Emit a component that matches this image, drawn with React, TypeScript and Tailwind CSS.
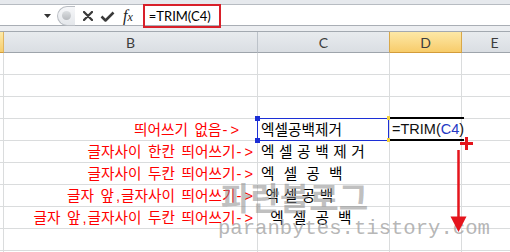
import React from 'react';

type Row = { b?: string; c?: string; pad?: string };

const rows: Row[] = [
  {},
  {},
  {},
  { b: '띄어쓰기 없음', c: '엑셀공백제거', pad: 'pr-[18px]' },
  { b: '글자사이 한칸 띄어쓰기', c: '엑 셀 공 백 제 거' },
  { b: '글자사이 두칸 띄어쓰기', c: '엑  셀  공  백' },
  { b: '글자 앞,글자사이 띄어쓰기', c: ' 엑 셀 공 백' },
  { b: '글자 앞,글자사이 두칸 띄어쓰기', c: '  엑  셀  공  백' },
  {},
  {},
];

const cellFont = "font-['Liberation_Sans','Noto_Sans_CJK_KR',sans-serif] text-[14.67px]";

// comma and arrow get a little of the extra room Excel's font gives them
const Label = ({ text }: { text: string }) => {
  const parts = text.split(',');
  return (
    <>
      {parts.map((p, i) => (
        <React.Fragment key={i}>
          {p}
          {i < parts.length - 1 && <span className="ml-[2px] mr-[1px]">,</span>}
        </React.Fragment>
      ))}
      <span className="ml-[1px] mr-[3px]">-</span>&gt;
    </>
  );
};

const FormulaBar = () => (
  <>
    <div className="h-[5px] bg-[#e6e9ed] border-b border-[#b7bcc2]" />
    <div className="relative flex h-[21px] items-center bg-white border-b border-[#a9aeb5]">
      <div className="w-[57px] h-full flex items-center justify-end pr-[6px] pt-[2px]">
        <svg width="7" height="4" viewBox="0 0 7 4">
          <path d="M0 0h7L3.5 4z" fill="#333" />
        </svg>
      </div>
      <div className="w-[18px] h-[20px] mt-[1px] rounded-l-full border border-r-0 border-[#b9bdc3] bg-gradient-to-b from-[#f6f7f9] to-[#e4e7eb] flex items-center pl-[4px]">
        <div className="w-[9px] h-[9px] rounded-full bg-gradient-to-b from-[#dcdfe2] to-[#b7babe]" />
      </div>
      <div className="flex items-center pt-[2px]">
        <svg className="ml-[8px]" width="10" height="10" viewBox="0 0 10 10">
          <path d="M1 1l8 8M9 1L1 9" stroke="#3a3a3a" strokeWidth="2.3" strokeLinecap="round" />
        </svg>
        <svg className="ml-[7px]" width="15" height="11" viewBox="0 0 15 11">
          <path d="M1.5 5.5l4 4L13.5 1.5" stroke="#3a3a3a" strokeWidth="2.5" fill="none" strokeLinejoin="round" />
        </svg>
        <span className="ml-[8px] italic font-['Liberation_Serif',serif] text-[16px] leading-none text-[#222]">
          f<span className="text-[12px]">x</span>
        </span>
      </div>
      <div className="ml-[16px] pt-[4px] font-['Lato',sans-serif] text-[13px] text-black">=TRIM(C4)</div>
      <div className="absolute left-[143px] top-[-1px] w-[78px] h-[24px] border-2 border-[#d8202a]" />
    </div>
    <div className="h-[5px] bg-[#eceef1]" />
  </>
);

const Header = () => (
  <div className="flex h-[22px] border-t border-[#a3a9b0] font-['Lato',sans-serif] text-[14px] text-[#3d3d3d]">
    <div className="w-[4px] shrink-0 border-r border-b border-r-[#e0b560] border-b-[#d39c3a] bg-gradient-to-b from-[#fdeaa8] to-[#f6cd6d]" />
    <div className="w-[254px] shrink-0 flex items-center justify-center border-r border-b border-r-[#bcc2c9] border-b-[#9ea4ab] bg-gradient-to-b from-[#e8ebee] to-[#dadee3]">B</div>
    <div className="w-[132px] shrink-0 flex items-center justify-center border-r border-b border-r-[#d9a848] border-b-[#9ea4ab] bg-gradient-to-b from-[#e8ebee] to-[#dadee3]">C</div>
    <div className="w-[72px] shrink-0 flex items-center justify-center border-r border-b border-r-[#d9a848] border-b-[#d39c3a] bg-gradient-to-b from-[#fde8a6] to-[#f7cc6a]">D</div>
    <div className="w-[66px] shrink-0 flex items-center justify-center border-r border-b border-r-[#bcc2c9] border-b-[#9ea4ab] bg-gradient-to-b from-[#e8ebee] to-[#dadee3]">E</div>
    <div className="flex-1 border-b border-[#9ea4ab] bg-gradient-to-b from-[#e8ebee] to-[#dadee3]" />
  </div>
);

export default function App() {
  return (
    <div className="relative w-[510px] h-[252px] overflow-hidden bg-white">
      <FormulaBar />
      <Header />
      <div className={cellFont}>
        {rows.map((r, i) => (
          <div key={i} className="flex h-[22px] border-b border-[#dadcdd]">
            <div className="w-[4px] shrink-0 border-r border-[#dadcdd]" />
            <div className={`w-[254px] shrink-0 border-r border-[#dadcdd] flex items-center justify-end whitespace-pre text-[#f00] [word-spacing:2.5px] ${r.pad ?? 'pr-[4px]'}`}>
              {r.b && <Label text={r.b} />}
            </div>
            <div className="w-[132px] shrink-0 border-r border-[#dadcdd] flex items-center pl-[3px] whitespace-pre text-black [word-spacing:0.5px]">
              {r.c}
            </div>
            <div className="w-[72px] shrink-0 border-r border-[#dadcdd] flex items-center pl-[2px] whitespace-nowrap">
              {i === 3 && (
                <span className="relative z-10 font-['Liberation_Sans',sans-serif] text-[14.5px] text-[#111]">
                  =TRIM(<span className="text-[#2438c4]">C4</span>)
                </span>
              )}
            </div>
            <div className="w-[66px] shrink-0 border-r border-[#dadcdd]" />
            <div className="flex-1" />
          </div>
        ))}
      </div>

      {/* C4 selection */}
      <div className="absolute left-[257px] top-[118px] w-[132px] h-[23px] border border-[#1c2fd6]" />
      <div className="absolute left-[255px] top-[116px] w-[5px] h-[5px] bg-[#1c2fd6]" />
      <div className="absolute left-[255px] top-[138px] w-[5px] h-[5px] bg-[#1c2fd6]" />
      {/* D4 edit box */}
      <div className="absolute left-[389px] top-[117px] w-[75px] h-[24px] border-y-2 border-black" />
      <div className="absolute left-[387px] top-[116px] w-[3px] h-[4px] bg-[#f2d13a]" />
      <div className="absolute left-[387px] top-[138px] w-[3px] h-[4px] bg-[#f2d13a]" />

      {/* watermark */}
      <div className="absolute left-[221px] top-[180px] font-['Noto_Sans_CJK_KR',sans-serif] font-bold text-[32px] leading-none text-[#8a8a8a]/55 whitespace-nowrap">
        파란블로그
      </div>
      <div className="absolute left-[218px] top-[219px] font-['Liberation_Mono',monospace] text-[20.6px] leading-none text-[#a3a3a3]/80 whitespace-nowrap">
        paranbytes.tistory.com
      </div>

      {/* fill arrow */}
      <svg className="absolute left-[440px] top-[130px]" width="50" height="110" viewBox="440 130 50 110">
        <path d="M458.5 150V218" stroke="#e5141c" strokeWidth="2.5" />
        <path d="M450.5 216.5H466.5L458.5 232z" fill="#e5141c" />
        <path d="M460 143.5H473M466.5 137V150" stroke="#e5141c" strokeWidth="3" />
      </svg>
    </div>
  );
}
